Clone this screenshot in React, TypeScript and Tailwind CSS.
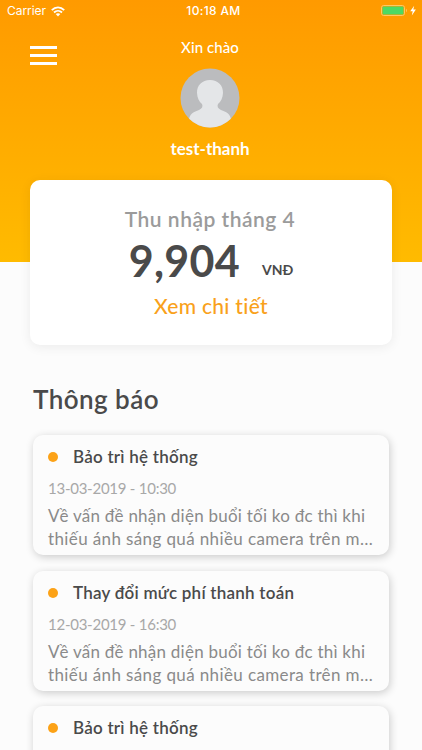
import React from 'react'

type Notice = {
  id: number
  title: string
  date?: string
  lines?: string[]
}

const notices: Notice[] = [
  {
    id: 1,
    title: 'Bảo trì hệ thống',
    date: '13-03-2019 - 10:30',
    lines: ['Về vấn đề nhận diện buổi tối ko đc thì khi', 'thiếu ánh sáng quá nhiều camera trên m…'],
  },
  {
    id: 2,
    title: 'Thay đổi mức phí thanh toán',
    date: '12-03-2019 - 16:30',
    lines: ['Về vấn đề nhận diện buổi tối ko đc thì khi', 'thiếu ánh sáng quá nhiều camera trên m…'],
  },
  { id: 3, title: 'Bảo trì hệ thống' },
]

const StatusBar = () => (
  <div className="grid h-[22px] grid-cols-[1fr_auto_1fr] items-center pl-[7px] pr-[5px] font-['Inter',sans-serif] text-[12px] text-white">
    <div className="flex items-center gap-[5px]">
      <span className="tracking-[-0.05px]">Carrier</span>
      <svg width="14" height="11" viewBox="0 0 14 11" fill="none" stroke="white" strokeWidth="1.8">
        <path d="M0.8 4.1C4.4 0.4 9.6 0.4 13.2 4.1" />
        <path d="M3 6.5C5.3 4.2 8.7 4.2 11 6.5" />
        <path d="M7 10.4L4.7 8.1C6 6.9 8 6.9 9.3 8.1Z" fill="white" stroke="none" />
      </svg>
    </div>
    <span className="pl-[3px] font-medium tracking-[0.35px]">10:18 AM</span>
    <div className="flex items-center justify-end">
      <svg width="36" height="12" viewBox="0 0 36 12">
        <rect x="0.5" y="0.5" width="23" height="10" rx="2.2" fill="none" stroke="#ffc766" />
        <rect x="1.5" y="1.5" width="21" height="8" rx="1" fill="#4cd964" />
        <path d="M25 3.8v3.4c1.2-0.5 1.2-2.9 0-3.4Z" fill="#ffc766" />
        <path d="M33.2 0.8L29.2 6.2h2.5l-0.9 4.3l4.1-5.9h-2.6Z" fill="white" />
      </svg>
    </div>
  </div>
)

const Avatar = () => (
  <svg className="size-[60px]" viewBox="0 0 60 60">
    <defs>
      <clipPath id="avatar">
        <circle cx="30" cy="30" r="29.5" />
      </clipPath>
    </defs>
    <circle cx="30" cy="30" r="29.5" fill="#bbbcbe" />
    <path
      clipPath="url(#avatar)"
      fill="#e4e6e8"
      d="M30 12C38 12 43.3 17.5 43 25C42.7 30 41 33.5 38 36C36.8 38.5 38 40.5 41 42C46 44 50.5 45.5 51 52V60H9V52C9.5 45.5 14 44 19 42C22 40.500 23.2 38.5 22 36C19 33.5 17.3 30 17 25C16.7 17.5 22 12 30 12Z"
    />
  </svg>
)

const IncomeCard = () => (
  <section className="mx-[30px] mt-5 flex h-[165px] flex-col items-center whitespace-nowrap rounded-[10px] bg-white pt-[25px] shadow-[0_2px_12px_rgba(0,0,0,0.07)]">
    <h2 className="mr-[2px] text-[21px] font-semibold leading-7 tracking-[0.5px] text-[#9b9b9b]">Thu nhập tháng 4</h2>
    <div className="-mt-px flex h-[60px] items-baseline gap-[22px] text-[#4a4a4a]">
      <span className="text-[43px] font-bold leading-[58px] tracking-[0.3px]">9,904</span>
      <span className="-translate-y-[2px] text-[14px] font-bold">VNĐ</span>
    </div>
    <a className="text-[21px] font-medium leading-7 tracking-[0.3px] text-[#f9a11b]">Xem chi tiết</a>
  </section>
)

const NoticeCard = ({ title, date, lines }: Notice) => (
  <li className="h-[120px] shrink-0 whitespace-nowrap rounded-[10px] bg-[#fcfcfc] pl-[15px] pt-[10px] shadow-[1px_2px_8px_rgba(0,0,0,0.2)]">
    <div className="flex h-6 items-center gap-[15px]">
      <span className="size-[10px] rounded-full bg-[#fca217]" />
      <h3 className="text-[17px] font-semibold leading-6 tracking-[0.24px] text-[#4a4a4a]">{title}</h3>
    </div>
    {date && (
      <p className="mt-2 text-[15px] leading-[22px] tracking-[-0.25px] text-[#a8a8a8]">{date}</p>
    )}
    {lines && (
      <p className="mt-[5px] text-[17px] leading-[23px] tracking-[0.24px] text-[#8a8a8a]">
        {lines.map((line) => (
          <span key={line} className="block last:tracking-[0.38px]">
            {line}
          </span>
        ))}
      </p>
    )}
  </li>
)

const App = () => {
  return (
    <main className="h-[750px] w-[422px] overflow-hidden bg-[linear-gradient(#ff9a00_0px,#ffbb00_262px,#fcfcfc_262px)] font-['Lato',sans-serif]">
      <StatusBar />
      <header className="grid h-[138px] grid-cols-[1fr_auto_1fr] pl-[30px] pr-[32px] text-white">
        <button className="mt-6 flex h-[19px] w-[27px] flex-col justify-between" aria-label="Menu">
          <span className="h-[3px] w-full bg-white" />
          <span className="h-[3px] w-full bg-white" />
          <span className="h-[3px] w-full bg-white" />
        </button>
        <div className="flex flex-col items-center pt-[15px]">
          <p className="text-[15px] font-medium leading-5 tracking-[0.1px]">Xin chào</p>
          <div className="mt-[11px]">
            <Avatar />
          </div>
          <p className="mt-[11px] text-[17px] font-bold leading-5">test-thanh</p>
        </div>
      </header>
      <IncomeCard />
      <h2 className="ml-[33px] mt-9 text-[26px] font-semibold leading-9 tracking-[0.45px] text-[#4a4a4a]">Thông báo</h2>
      <ul className="mx-[33px] mt-[18px] flex flex-col gap-[15.5px]">
        {notices.map((notice) => (
          <NoticeCard key={notice.id} {...notice} />
        ))}
      </ul>
    </main>
  )
}

export default App
